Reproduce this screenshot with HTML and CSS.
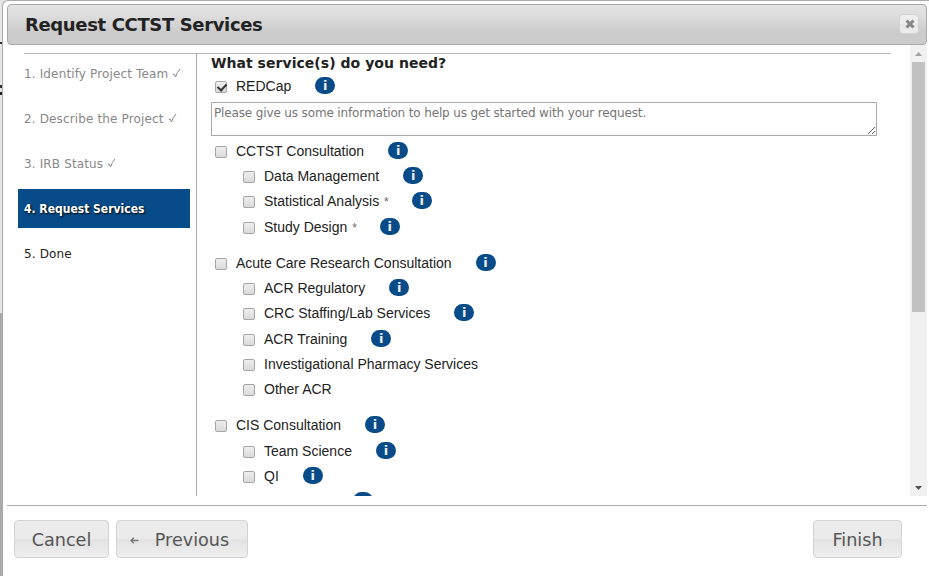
FILE: index.html
```
<!DOCTYPE html>
<html lang="en">
<head>
  <meta charset="UTF-8">
  <meta name="viewport" content="width=device-width, initial-scale=1">
  <title>Request CCTST Services</title>
  <link rel="stylesheet" href="styles.css">
</head>
<body>

  <div class="dialog">
    <div class="titlebar">
      <span class="title">Request CCTST Services</span>
      <button class="close" type="button" aria-label="Close">
        <svg width="10" height="10" viewBox="0 0 10 10"><path d="M1.5 1.5L8.5 8.5M8.5 1.5L1.5 8.5" stroke="#888" stroke-width="3.1"/></svg>
      </button>
    </div>

    <div class="body">
      <div class="content">
        <ul class="steps">
          <li class="done">1. Identify Project Team <svg class="tick" viewBox="0 0 9 11"><path d="M.8 6.5L2 6L3.5 9Q5 4 8 1"/></svg></li>
          <li class="done">2. Describe the Project <svg class="tick" viewBox="0 0 9 11"><path d="M.8 6.5L2 6L3.5 9Q5 4 8 1"/></svg></li>
          <li class="done">3. IRB Status <svg class="tick" viewBox="0 0 9 11"><path d="M.8 6.5L2 6L3.5 9Q5 4 8 1"/></svg></li>
          <li class="active">4. Request Services</li>
          <li>5. Done</li>
        </ul>

        <div class="services">
          <h2>What service(s) do you need?</h2>
          <label class="row first"><input type="checkbox" checked><span>REDCap</span><i class="info">i</i></label>
          <textarea class="details" placeholder="Please give us some information to help us get started with your request."></textarea>

          <div class="group">
            <label class="row"><input type="checkbox"><span>CCTST Consultation</span><i class="info">i</i></label>
            <label class="row sub"><input type="checkbox"><span>Data Management</span><i class="info">i</i></label>
            <label class="row sub"><input type="checkbox"><span>Statistical Analysis <small>*</small></span><i class="info">i</i></label>
            <label class="row sub"><input type="checkbox"><span>Study Design <small>*</small></span><i class="info">i</i></label>
          </div>

          <div class="group">
            <label class="row"><input type="checkbox"><span>Acute Care Research Consultation</span><i class="info">i</i></label>
            <label class="row sub"><input type="checkbox"><span>ACR Regulatory</span><i class="info">i</i></label>
            <label class="row sub"><input type="checkbox"><span>CRC Staffing/Lab Services</span><i class="info">i</i></label>
            <label class="row sub"><input type="checkbox"><span>ACR Training</span><i class="info">i</i></label>
            <label class="row sub"><input type="checkbox"><span>Investigational Pharmacy Services</span></label>
            <label class="row sub"><input type="checkbox"><span>Other ACR</span></label>
          </div>

          <div class="group">
            <label class="row"><input type="checkbox"><span>CIS Consultation</span><i class="info">i</i></label>
            <label class="row sub"><input type="checkbox"><span>Team Science</span><i class="info">i</i></label>
            <label class="row sub"><input type="checkbox"><span>QI</span><i class="info">i</i></label>
            <div class="row sub cut"><i class="info"></i></div>
          </div>
        </div>
      </div>

      <div class="scrollbar">
        <svg width="17" height="17" viewBox="0 0 17 17"><path d="M5 11L8.5 7L12 11z" fill="#a3a3a3"/></svg>
        <div class="thumb"></div>
        <svg width="17" height="17" viewBox="0 0 17 17"><path d="M5 7L8.5 11L12 7z" fill="#505050"/></svg>
      </div>
    </div>

    <div class="buttonpane">
      <button class="btn cancel" type="button">Cancel</button>
      <button class="btn prev" type="button">
        <svg width="9" height="7" viewBox="0 0 9 7"><path d="M1 3.5H8.5M3.8 .8L1 3.5L3.8 6.2" fill="none" stroke="#777" stroke-width="1.4"/></svg>
        Previous
      </button>
      <button class="btn finish" type="button">Finish</button>
    </div>
  </div>

</body>
</html>
```
FILE: styles.css
```
* { box-sizing: border-box; }
html, body {
  margin: 0;
  height: 100%;
  overflow: hidden;
}
body {
  padding-left: 2px;
  background:
    linear-gradient(#333, #333) 0 42px / 2px 2px no-repeat,
    linear-gradient(#333, #333) 0 85px / 2px 3px no-repeat,
    linear-gradient(#222, #222) 0 92px / 2px 3px no-repeat,
    linear-gradient(#e6e6e6 313px, #aaa 313px);
  font-family: Verdana, "DejaVu Sans", sans-serif;
  color: #222;
}
.dialog {
  display: flex;
  flex-direction: column;
  height: 586px;
  padding: 3px 1px 0 4px;
  background: #fff;
  border: 1px solid #aaa;
  border-right: 0;
  border-radius: 6px 0 0 0;
}
.titlebar {
  display: flex;
  align-items: center;
  justify-content: space-between;
  flex: none;
  height: 41px;
  width: 920px;
  padding: 0 7px 0 17px;
  border: 1px solid #aaa;
  border-radius: 4px;
  background: linear-gradient(#e3e3e3, #dedede 25%, #cbcbcb 70%, #ccc);
}
.title {
  font-size: 18px;
  font-weight: bold;
  letter-spacing: -0.36px;
}
.close {
  display: flex;
  align-items: center;
  justify-content: center;
  width: 20px;
  height: 20px;
  margin-top: -1px;
  padding: 0 0 0 1px;
  border: 1px solid #d3d3d3;
  border-radius: 4px;
  background: linear-gradient(#eee 50%, #e5e5e5 50%, #ededed);
}
.body {
  display: flex;
  flex: none;
  width: 920px;
  height: 451px;
  overflow: hidden;
}
.content {
  display: flex;
  flex: 1;
  padding: 8px 0 0 11px;
  background: linear-gradient(#bbb, #bbb) 17px 8px / 867px 1px no-repeat;
}
.steps {
  width: 179px;
  margin: 0;
  padding: 1px 6px 0 0;
  border-right: 1px solid #aaa;
  list-style: none;
}
.steps li {
  display: flex;
  align-items: center;
  height: 39px;
  margin-bottom: 6px;
  padding-left: 6px;
  font-size: 12px;
  letter-spacing: 0.14px;
  white-space: pre;
}
.steps .done { color: #888; }
.steps .active {
  background: #074b88;
  color: #fff;
  font-family: Tahoma, "DejaVu Sans Condensed", "DejaVu Sans", sans-serif;
  font-stretch: condensed;
  font-weight: bold;
  letter-spacing: 0;
  text-shadow: 1px 1px 2px #000;
}
.tick {
  width: 9px;
  height: 11px;
  fill: none;
  stroke: #888;
}
.services {
  padding-left: 14px;
}
.services h2 {
  height: 20px;
  margin: 0;
  font-size: 14px;
  line-height: 20px;
  letter-spacing: 0.04px;
}
.row {
  display: flex;
  align-items: center;
  height: 25.3px;
  padding-left: 4px;
  font-family: Arial, "Liberation Sans", sans-serif;
  font-size: 14px;
  white-space: nowrap;
}
.row.first { height: 26px; }
.row.sub { padding-left: 32px; }
.row small {
  margin-left: 1px;
  margin-right: -1px;
  color: #666;
  font-size: 12px;
}
.row input {
  appearance: none;
  width: 12px;
  height: 12px;
  margin: 2px 9px 0 0;
  border: 1px solid #a6a6a6;
  border-radius: 2px;
  background: linear-gradient(#eee, #dadada);
}
.row input:checked {
  position: relative;
}
.row input:checked::after {
  content: "";
  position: absolute;
  left: 3px;
  top: 0;
  width: 4px;
  height: 7px;
  border: solid #333;
  border-width: 0 2px 2px 0;
  transform: rotate(42deg);
}
.info {
  width: 20px;
  height: 17px;
  margin: -1px 0 0 24px;
  border-radius: 9px;
  background: #074b88;
  color: #eee;
  font: bold 13px/17px Verdana, "DejaVu Sans", sans-serif;
  text-align: center;
}
.row.cut .info { margin-left: 110px; }
.details {
  display: block;
  width: 666px;
  height: 34px;
  margin: 3px 0 2px;
  padding: 3px 2px 1px;
  border: 1px solid #a9a9a9;
  font-family: Verdana, "DejaVu Sans", sans-serif;
  font-size: 12px;
  letter-spacing: -0.14px;
}
.details::placeholder { color: #757575; }
.group { margin-bottom: 10.8px; }
.scrollbar {
  display: flex;
  flex-direction: column;
  justify-content: space-between;
  width: 17px;
  background: #f1f1f1;
}
.scrollbar svg { display: block; }
.thumb {
  height: 250px;
  margin: 0 2px auto;
  background: #c1c1c1;
}
.buttonpane {
  display: flex;
  gap: 7px;
  width: 920px;
  margin-top: 9px;
  padding: 14px 25px 0 7px;
  border-top: 1px solid #aaa;
}
.btn {
  display: flex;
  align-items: center;
  justify-content: center;
  height: 38px;
  padding: 2px 0 0;
  border: 1px solid #d3d3d3;
  border-radius: 4px;
  background: linear-gradient(#ebebeb 50%, #e2e2e2 50%, #efefef);
  color: #555;
  font-family: Verdana, "DejaVu Sans", sans-serif;
  font-size: 17.6px;
}
.cancel { width: 95px; }
.prev {
  width: 132px;
  gap: 16px;
  padding-right: 5px;
}
.finish {
  width: 89px;
  margin-left: auto;
}
```
